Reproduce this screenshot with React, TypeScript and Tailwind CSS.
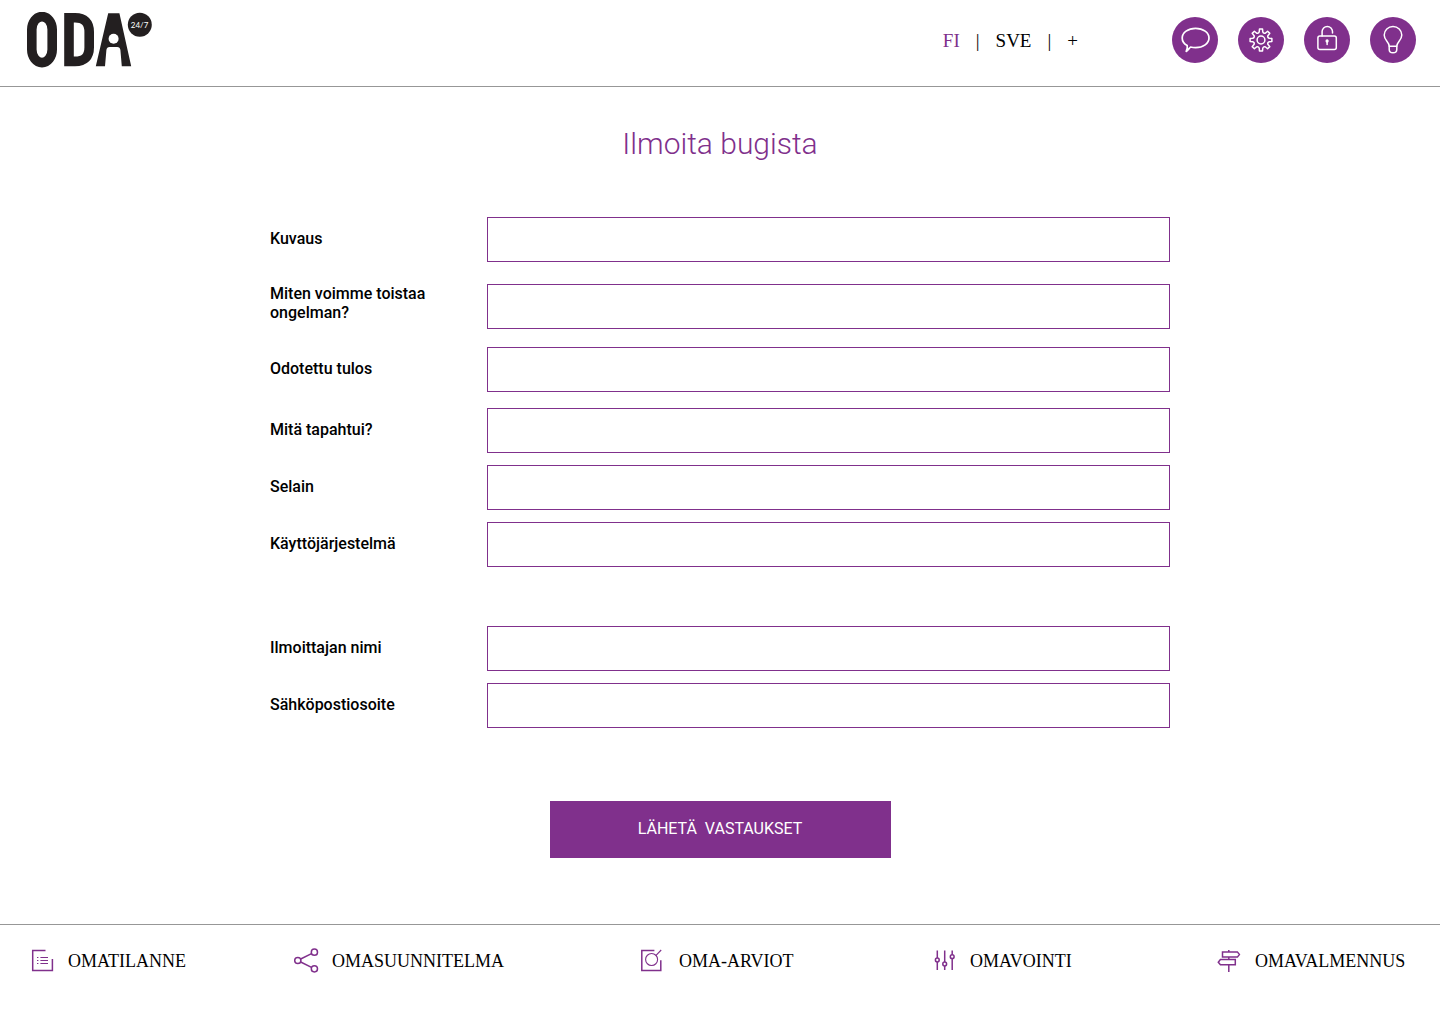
import type { ReactNode } from "react";

const serif = "font-['Liberation_Serif',serif]";

function Logo() {
  return (
    <svg viewBox="0 0 126 56" className="h-14 w-[126px]" role="img" aria-label="ODA 24/7">
      <g fill="none" stroke="#231f20" strokeWidth="9.6">
        <rect x="4.8" y="4.6" width="20.4" height="46" rx="10.2" ry="13" />
        <path d="M42 5.8H48Q62.2 5.8 62.2 20V35.2Q62.2 49.4 48 49.4H42Z" strokeLinejoin="miter" />
      </g>
      <path
        d="M81.2 1.2H92.4L104.2 54.2H94.8L93.4 38Q93 35 90.2 35H82.6Q79.8 35 79.4 38L78 54.2H68.8Z"
        fill="#231f20"
      />
      <circle cx="86.6" cy="26.7" r="5" fill="#fff" />
      <circle cx="112.8" cy="12.8" r="12" fill="#231f20" />
      <text x="112.6" y="15.8" textAnchor="middle" fontSize="8" fill="#fff" fontFamily="Lato, sans-serif">
        24/7
      </text>
    </svg>
  );
}

function gearPath(teeth: number) {
  const points: string[] = [];
  const at = (deg: number, r: number) => {
    const rad = (deg * Math.PI) / 180;
    return `${(23 + r * Math.cos(rad)).toFixed(2)} ${(23 + r * Math.sin(rad)).toFixed(2)}`;
  };
  for (let i = 0; i < teeth; i++) {
    const a = (i * 360) / teeth;
    points.push(`${i === 0 ? "M" : "L"}${at(a - 12, 8.4)}L${at(a - 8, 11)}L${at(a + 8, 11)}L${at(a + 12, 8.4)}`);
    points.push(`Q${at(a + 22.5, 6.6)} ${at(a + 33, 8.4)}`);
  }
  return points.join("") + "Z";
}

const actions: { label: string; icon: ReactNode }[] = [
  {
    label: "Viestit",
    icon: (
      <path
        strokeWidth="1.7"
        d="M18.6 30C16.8 31.8 15.6 33.6 14.2 34.4C15.2 32.4 15.6 30.4 15.2 28.6C12 26.8 10.2 24 10.2 21C10.2 15.6 16 11.4 23.6 11.4C31.2 11.4 37 15.6 37 21C37 26.4 31.2 30.6 23.6 30.6C21.8 30.6 20.2 30.4 18.6 30Z"
      />
    ),
  },
  {
    label: "Asetukset",
    icon: (
      <>
        <path d={gearPath(8)} />
        <circle cx="23" cy="23" r="3.9" />
      </>
    ),
  },
  {
    label: "Kirjaudu",
    icon: (
      <>
        <rect x="13.9" y="19" width="18.4" height="13.4" rx="2" />
        <path d="M18.1 19V14.6A5.2 5.2 0 0 1 28.5 14.6V16" />
        <circle cx="23.1" cy="24" r="0.9" fill="#fff" />
        <path d="M23.1 24V27.6" />
      </>
    ),
  },
  {
    label: "Vinkit",
    icon: (
      <>
        <path d="M19.2 29.2C19.2 24.8 14.2 23.4 14.2 18A8.8 8.5 0 0 1 31.8 18C31.8 23.4 26.8 24.8 26.8 29.2Z" />
        <path d="M19.2 29.2V32.4C19.2 36.8 26.8 36.8 26.8 32.4V29.2" />
      </>
    ),
  },
];

const navItems: { label: string; icon: ReactNode }[] = [
  {
    label: "OMATILANNE",
    icon: (
      <>
        <path d="M15.5 2.5H2.7V22.6H22.4V11" />
        <path strokeWidth="1" d="M7 9.5H8.4M10.4 9.5H18M7 12.5H8.4M10.4 12.5H18M7 15.5H8.4M10.4 15.5H18" />
      </>
    ),
  },
  {
    label: "OMASUUNNITELMA",
    icon: (
      <>
        <circle cx="3.8" cy="12.5" r="3.1" />
        <circle cx="20.4" cy="4.2" r="3.1" />
        <circle cx="20.4" cy="20.8" r="3.1" />
        <path d="M6.7 11L17.5 5.7M6.7 14L17.5 19.3" />
      </>
    ),
  },
  {
    label: "OMA-ARVIOT",
    icon: (
      <>
        <path d="M13.4 2.5H0.8V22.6H19.8V12.2" />
        <circle cx="10.6" cy="11.5" r="6" strokeWidth="1.1" />
        <path strokeWidth="1.1" d="M14.8 7.6L20.2 2" />
      </>
    ),
  },
  {
    label: "OMAVOINTI",
    icon: (
      <>
        <path d="M5.3 2.5V10M5.3 14V22M12.7 2.5V14M12.7 18V22M20.2 2.5V6.7M20.2 10.7V22" />
        <circle cx="5.3" cy="12" r="1.9" />
        <circle cx="12.7" cy="16" r="1.9" />
        <circle cx="20.2" cy="8.7" r="1.9" />
      </>
    ),
  },
  {
    label: "OMAVALMENNUS",
    icon: (
      <>
        <path d="M5.5 3.9H20.4L22.4 6.5L20.4 9.1H5.5ZM18.3 11.6H3.4L1.3 14.2L3.4 16.7H18.3Z" />
        <path d="M11.8 2V3.9M11.8 9.1V11.6M11.8 16.7V24" />
      </>
    ),
  },
];

function Field({ id, label, type = "text", row }: { id: string; label: string; type?: string; row: string }) {
  return (
    <div className={`flex ${row}`}>
      <label htmlFor={id} className="w-[217px] shrink-0 pr-12 pb-0.5 text-base leading-[19px] font-medium">
        {label}
      </label>
      <input
        id={id}
        name={id}
        type={type}
        className="h-[45px] min-w-0 flex-1 border border-[#80308c] bg-white px-3 outline-none focus:ring-1 focus:ring-[#80308c]"
      />
    </div>
  );
}

export default function App() {
  return (
    <div className="flex min-h-screen flex-col bg-white font-[Roboto,sans-serif] text-black">
      <header className="flex items-center border-b border-[#979797] pt-3 pr-6 pb-[18px] pl-[27px]">
        <a href="#etusivu">
          <Logo />
        </a>
        <nav aria-label="Kieli" className={`mr-[94px] ml-auto flex items-center gap-4 pt-0.5 text-[19px] leading-6 ${serif}`}>
          <a href="#fi" className="text-[#80308c]">FI</a>
          <span>|</span>
          <a href="#sve">SVE</a>
          <span>|</span>
          <a href="#lisaa">+</a>
        </nav>
        <div className="flex gap-5">
          {actions.map(({ label, icon }) => (
            <button key={label} type="button" aria-label={label} className="size-[46px] rounded-full bg-[#80308c]">
              <svg
                viewBox="0 0 46 46"
                fill="none"
                stroke="#fff"
                strokeWidth="1.5"
                strokeLinejoin="round"
                strokeLinecap="round"
                className="size-full"
              >
                {icon}
              </svg>
            </button>
          ))}
        </div>
      </header>

      <main className="mx-auto w-full max-w-[900px] flex-1">
        <h1 className="mt-[39px] text-center text-[30px] leading-9 font-light text-[#80308c]">Ilmoita bugista</h1>
        <form className="pb-[66px]">
          <div className="mt-[55px]">
            <Field id="kuvaus" label="Kuvaus" row="items-center" />
            <Field id="toisto" label="Miten voimme toistaa ongelman?" row="mt-[22px] items-start" />
            <Field id="odotettu" label="Odotettu tulos" row="mt-[18px] items-center" />
            <Field id="tapahtui" label="Mitä tapahtui?" row="mt-4 items-center" />
            <Field id="selain" label="Selain" row="mt-3 items-center" />
            <Field id="jarjestelma" label="Käyttöjärjestelmä" row="mt-3 items-center" />
          </div>
          <div className="mt-[59px]">
            <Field id="nimi" label="Ilmoittajan nimi" row="items-center" />
            <Field id="sahkoposti" label="Sähköpostiosoite" type="email" row="mt-3 items-center" />
          </div>
          <button
            type="submit"
            className="mx-auto mt-[73px] block h-[57px] w-[341px] bg-[#80308c] pb-0.5 text-base whitespace-pre text-white"
          >
            {"LÄHETÄ  VASTAUKSET"}
          </button>
        </form>
      </main>

      <footer className="border-t border-[#979797] pt-[23px] pr-8 pb-[55px] pl-[30px]">
        <nav aria-label="Päävalikko" className="grid grid-cols-[264fr_347fr_291fr_285fr_191fr]">
          {navItems.map(({ label, icon }) => (
            <a key={label} href={`#${label.toLowerCase()}`} className={`flex items-center gap-3 text-lg leading-6 ${serif}`}>
              <svg
                viewBox="0 0 26 26"
                fill="none"
                stroke="#80308c"
                strokeWidth="1.5"
                className="size-[26px] shrink-0"
                aria-hidden="true"
              >
                {icon}
              </svg>
              {label}
            </a>
          ))}
        </nav>
      </footer>
    </div>
  );
}
